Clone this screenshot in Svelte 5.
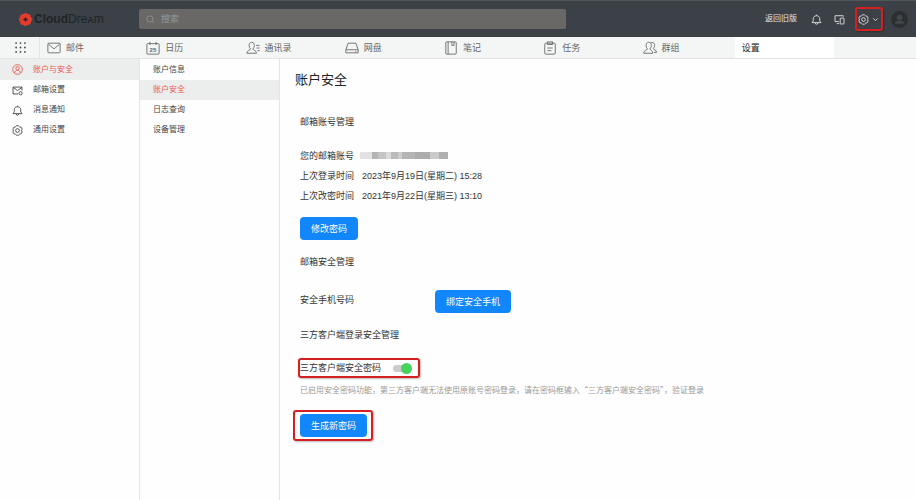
<script>
	let keyword = $state('');
	let clientPassword = $state(true);

	const tabs = [
		{ icon: 'mail', label: '邮件' },
		{ icon: 'calendar', label: '日历' },
		{ icon: 'contacts', label: '通讯录' },
		{ icon: 'disk', label: '网盘' },
		{ icon: 'note', label: '笔记' },
		{ icon: 'task', label: '任务' },
		{ icon: 'group', label: '群组' },
		{ icon: null, label: '设置' }
	];

	const sections = [
		{ icon: 'account', label: '账户与安全' },
		{ icon: 'mailset', label: '邮箱设置' },
		{ icon: 'bell', label: '消息通知' },
		{ icon: 'gear', label: '通用设置' }
	];

	const pages = ['账户信息', '账户安全', '日志查询', '设备管理'];
</script>

{#snippet icon(name)}
	<svg class="icon icon-{name}" viewBox="0 0 16 16" aria-hidden="true">
		{#if name === 'mail'}
			<rect x="1" y="2.5" width="14" height="11" rx="1" />
			<path d="M1.5 3.5 8 9l6.5-5.5" />
		{:else if name === 'calendar'}
			<rect x="1" y="3" width="14" height="12" rx="1" />
			<path d="M4.5 1v3.5M11.5 1v3.5" />
			<text x="8" y="12.5">25</text>
		{:else if name === 'contacts'}
			<path d="M6.5 1.5c-2 0-3.200 1.500-3 3.800.1 1.700.9 3 1.500 3.700.2 1.500-4 1.500-4 5h11c0-3.500-4.200-3.500-4-5 .7-.7 1.400-2 1.500-3.700.2-2.300-1-3.800-3-3.800zM11.500 5h4M12 8h3.500M13 11h2.500" />
		{:else if name === 'disk'}
			<path d="M3.500 2.500h9L15 10v3.500H1V10zM1 10h14M12 12h1" />
		{:else if name === 'note'}
			<rect x="2" y="1" width="12" height="14" rx="1" />
			<path d="M4.700 1v14M9 1v4h2.500V1" />
		{:else if name === 'task'}
			<rect x="2" y="2.500" width="12" height="12.500" rx="1" />
			<path d="M5 1h6v3H5zM5 8h6M5 11h4.500" />
		{:else if name === 'group'}
			<path d="M6.500 1.500C4.500 1.500 3.300 3 3.500 5.300c.1 1.700.8 3 1.500 3.700.2 1.500-4.200 1.500-4.200 5h10.400c0-3.500-3.500-3.500-3.200-5 .7-.7 1.400-2 1.500-3.700.2-2.300-1-3.800-3-3.800zM9 2c3.500-1.300 5 1.500 4 4.500-.3 1-.7 1.700-1.200 2.200 0 1.300 3.700 1.300 3.700 4.300h-3" />
		{:else if name === 'account'}
			<circle cx="8" cy="8" r="7" />
			<circle cx="8" cy="6.300" r="2.500" />
			<path d="M3.800 13c.2-5 8.200-5 8.400 0" />
		{:else if name === 'mailset'}
			<path d="M9 13H1.500V3h13v5M1.500 3.500 8 8l6.500-4.500" />
			<circle cx="12.500" cy="12" r="2.300" />
		{:else if name === 'bell'}
			<path d="M8 1v1.500M1.500 12.500h13L12.700 10V7c0-6-9.400-6-9.400 0v3zM6 13c0 2.600 4 2.600 4 0" />
		{:else if name === 'gear'}
			<path d="m6.500 1.200 3 0 1.700 1.600 2.300.6 1.200 2.400-.7 2.200.7 2.200-1.200 2.400-2.300.6-1.700 1.600h-3l-1.700-1.600-2.300-.6-1.200-2.400L2 8l-.7-2.200 1.200-2.400 2.300-.6z" />
			<circle cx="8" cy="8" r="2.700" />
		{:else if name === 'devices'}
			<path d="M7 11H1.500V2.500h12V4M4 14h3.500" />
			<rect x="9" y="6" width="5.500" height="8.500" rx=".5" />
		{:else if name === 'search'}
			<circle cx="7" cy="7" r="5.500" />
			<path d="m11 11 3.700 3.700" />
		{:else if name === 'chevron'}
			<path d="m3 5.500 5 5 5-5" />
		{/if}
	</svg>
{/snippet}

<div class="app">
	<header>
		<a class="logo" href="#home">
			<svg viewBox="0 0 16 16" aria-hidden="true">
				<path d="m8 .8 2.300 1.300 2.800.8.800 2.800L15.200 8l-1.300 2.300-.8 2.800-2.800.8L8 15.200l-2.300-1.300-2.800-.8-.8-2.800L.8 8l1.300-2.300.8-2.800 2.800-.8z" />
				<path class="hole" d="m8 5 1 2 2 1-2 1-1 2-1-2-2-1 2-1z" />
			</svg>
			<span><b>Cloud</b>Dre<small>A</small>m</span>
		</a>
		<label class="search">
			{@render icon('search')}
			<input type="text" placeholder="搜索" aria-label="搜索" bind:value={keyword} />
		</label>
		<div class="tools">
			<a href="#old">返回旧版</a>
			<button aria-label="通知">{@render icon('bell')}</button>
			<button aria-label="设备">{@render icon('devices')}</button>
			<button class="settings marked" aria-label="设置">
				{@render icon('gear')}
				{@render icon('chevron')}
			</button>
			<button class="avatar" aria-label="账户">
				<svg viewBox="0 0 16 16" aria-hidden="true">
					<circle cx="8" cy="6" r="2.500" />
					<path d="M3.500 12c0-4 9-4 9 0z" />
				</svg>
			</button>
		</div>
	</header>

	<nav class="tabs">
		<button class="apps" aria-label="应用">
			<svg viewBox="0 0 10 10" aria-hidden="true">
				{#each [1, 5, 9] as y}
					{#each [1, 5, 9] as x}
						<circle cx={x} cy={y} r=".8" />
					{/each}
				{/each}
			</svg>
		</button>
		{#each tabs as tab}
			<a href="#{tab.label}" class:active={!tab.icon}>
				{#if tab.icon}{@render icon(tab.icon)}{/if}
				{tab.label}
			</a>
		{/each}
	</nav>

	<div class="body">
		<nav class="side">
			{#each sections as section, i}
				<a href="#{section.label}" class:active={i === 0}>
					{@render icon(section.icon)}
					{section.label}
				</a>
			{/each}
		</nav>
		<nav class="side pages">
			{#each pages as page, i}
				<a href="#{page}" class:active={i === 1}>{page}</a>
			{/each}
		</nav>

		<main>
			<h1>账户安全</h1>

			<section>
				<h2>邮箱账号管理</h2>
				<dl>
					<dt>您的邮箱账号</dt>
					<dd><span class="masked"></span></dd>
					<dt>上次登录时间</dt>
					<dd>2023年9月19日(星期二) 15:28</dd>
					<dt>上次改密时间</dt>
					<dd>2021年9月22日(星期三) 13:10</dd>
				</dl>
				<button class="primary">修改密码</button>
			</section>

			<section>
				<h2>邮箱安全管理</h2>
				<div class="phone">
					<span>安全手机号码</span>
					<button class="primary">绑定安全手机</button>
				</div>
			</section>

			<section>
				<h2>三方客户端登录安全管理</h2>
				<label class="switch marked">
					三方客户端安全密码
					<input type="checkbox" role="switch" bind:checked={clientPassword} />
				</label>
				<p>已启用安全密码功能，第三方客户端无法使用原账号密码登录，请在密码框输入“三方客户端安全密码”，验证登录</p>
				<div class="generate marked">
					<button class="primary">生成新密码</button>
				</div>
			</section>
		</main>
	</div>
</div>

<style>
	:global(body) {
		margin: 0;
		background: #fefefe;
	}

	.app {
		display: flex;
		flex-direction: column;
		min-height: 100vh;
		font: 9px/20px 'Liberation Sans', 'Noto Sans CJK SC', sans-serif;
		color: #333;
	}

	a {
		color: inherit;
		text-decoration: none;
	}

	button {
		font: inherit;
		color: inherit;
		border: none;
		background: none;
		padding: 0;
		margin: 0;
		cursor: pointer;
	}

	svg {
		display: block;
		flex: none;
	}

	.icon {
		width: 11px;
		height: 11px;
		fill: none;
		stroke: currentColor;
		stroke-width: 1.3;
	}

	.icon text {
		font-size: 7px;
		font-weight: bold;
		text-anchor: middle;
		fill: currentColor;
		stroke: none;
	}

	.marked {
		border: 2px solid #d51f20;
		border-radius: 3px;
		box-shadow: 1px 1px 2px #0004;
	}

	header {
		display: flex;
		align-items: center;
		height: 36px;
		border-top: 1px solid #51565a;
		background: #3b4146;
		color: #e4e5e6;
	}

	.logo {
		display: flex;
		align-items: center;
		box-sizing: border-box;
		gap: 1px;
		width: 139px;
		padding-left: 18px;
		font-size: 12px;
		color: #202427;
	}

	.logo small {
		font-size: 9px;
		font-weight: bold;
	}

	.logo svg {
		width: 15px;
		height: 15px;
		fill: #e43d2f;
	}

	.logo .hole {
		fill: #3b2524;
	}

	.search {
		display: flex;
		align-items: center;
		flex: 0 1 427px;
		box-sizing: border-box;
		gap: 6px;
		height: 20px;
		padding: 0 7px;
		border-radius: 2px;
		background: #696867;
		color: #999;
	}

	.icon-search {
		width: 9px;
		height: 9px;
	}

	.search input {
		flex: 1;
		min-width: 0;
		padding: 0;
		border: none;
		outline: none;
		background: none;
		font: inherit;
		color: #fff;
	}

	.search input::placeholder {
		color: #999;
		opacity: 1;
	}

	.tools {
		display: flex;
		align-items: center;
		gap: 12px;
		margin-left: auto;
		padding-right: 8px;
		font-size: 8px;
	}

	.tools a {
		margin-right: 2px;
	}

	.settings {
		display: flex;
		align-items: center;
		justify-content: space-between;
		box-sizing: border-box;
		width: 28px;
		height: 24px;
		padding: 0 2px 0 1px;
		margin: 0 -4px 0 -2px;
	}

	.icon-chevron {
		width: 7px;
		height: 7px;
		stroke-width: 2;
	}

	.avatar svg {
		width: 17px;
		height: 17px;
		border-radius: 50%;
		background: #2c3033;
		fill: #42474b;
	}

	.tabs {
		display: grid;
		grid-template-columns: 40px repeat(8, 1fr) 82px;
		height: 21px;
		border-bottom: 1px solid #e2e5e5;
		background: #f4f6f6;
		color: #666;
	}

	.tabs a {
		display: flex;
		align-items: center;
		gap: 5px;
		padding-left: 7px;
	}

	.tabs a.active {
		background: #fff;
		color: #222;
	}

	.tabs .icon {
		width: 14px;
		height: 14px;
		stroke-width: 1;
	}

	.apps {
		border-right: 1px solid #e2e5e5;
	}

	.apps svg {
		width: 11px;
		height: 11px;
		margin-left: 15px;
		fill: #444;
	}

	.body {
		display: flex;
		flex: 1;
	}

	.side {
		flex: 0 0 139px;
		border-right: 1px solid #e4e5e5;
		font-size: 8px;
		color: #444;
	}

	.side a {
		display: flex;
		align-items: center;
		gap: 10px;
		height: 20px;
		padding-left: 12px;
	}

	.side a:first-child {
		height: 21px;
	}

	.side a.active {
		background: #eceeee;
		color: #e95850;
	}

	.pages a {
		padding-left: 13px;
	}

	main {
		flex: 1;
		padding: 11px 15px;
	}

	h1 {
		margin: 0 0 22px;
		font-size: 13px;
		font-weight: normal;
		color: #222;
	}

	h2 {
		margin: 0;
		font-size: 9px;
		font-weight: normal;
	}

	section {
		margin-bottom: 12px;
		padding-left: 5px;
	}

	dl {
		display: grid;
		grid-template-columns: 62px 1fr;
		margin: 14px 0 11px;
	}

	dd {
		margin: 0;
	}

	.masked {
		display: block;
		width: 88px;
		height: 7px;
		margin: 6px 0 0 -2px;
		background: linear-gradient(to right, #e2e2e2 14%, #b4b4b4 14% 20%, #c4c4c4 20% 30%, #dadada 30% 35%, #bababa 35% 43%, #cdcdcd 43% 48%, #b5b5b5 48% 62%, #acacac 62% 80%, #cacaca 80% 90%, #b0b0b0 90%);
	}

	.primary {
		display: block;
		height: 23px;
		padding: 0 11px;
		border-radius: 4px;
		background: #1286fb;
		color: #fff;
	}

	.phone {
		display: flex;
		margin-top: 18px;
	}

	.phone span {
		width: 135px;
	}

	.switch {
		display: flex;
		align-items: center;
		box-sizing: border-box;
		gap: 12px;
		width: fit-content;
		height: 20px;
		margin: 13px 0 0 -2px;
		padding-right: 7px;
	}

	.switch input {
		appearance: none;
		position: relative;
		width: 18px;
		height: 7px;
		margin: 0;
		border-radius: 4px;
		background: #ccc;
		cursor: pointer;
	}

	.switch input::before {
		content: '';
		position: absolute;
		top: -2px;
		left: -1px;
		width: 11px;
		height: 11px;
		border-radius: 50%;
		background: #999;
	}

	.switch input:checked::before {
		left: 8px;
		background: #46d35c;
	}

	p {
		margin: 2px 0 10px;
		font: 8px/20px 'Noto Sans CJK SC', sans-serif;
		color: #999;
	}

	.generate {
		width: fit-content;
		margin-left: -7px;
		padding: 2px 4px 2px 5px;
	}
</style>
